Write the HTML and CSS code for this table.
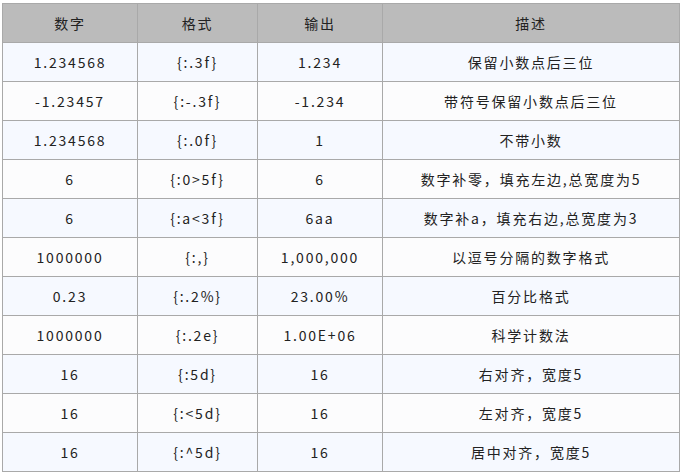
FILE: index.html
```html
<!DOCTYPE html>
<html>
<head>
<meta charset="utf-8">
<link rel="stylesheet" href="styles.css">
</head>
<body>
<table class="fmt">
<colgroup>
<col class="c1"><col class="c2"><col class="c3"><col class="c4">
</colgroup>
<thead>
<tr><th>数字</th><th>格式</th><th>输出</th><th>描述</th></tr>
</thead>
<tbody>
<tr><td>1.234568</td><td>{:.3f}</td><td>1.234</td><td>保留小数点后三位</td></tr>
<tr><td>-1.23457</td><td>{:-.3f}</td><td>-1.234</td><td>带符号保留小数点后三位</td></tr>
<tr><td>1.234568</td><td>{:.0f}</td><td>1</td><td>不带小数</td></tr>
<tr><td>6</td><td>{:0&gt;5f}</td><td>6</td><td>数字补零，填充左边,总宽度为5</td></tr>
<tr><td>6</td><td>{:a&lt;3f}</td><td>6aa</td><td>数字补a，填充右边,总宽度为3</td></tr>
<tr><td>1000000</td><td>{:,}</td><td>1,000,000</td><td>以逗号分隔的数字格式</td></tr>
<tr><td>0.23</td><td>{:.2%}</td><td>23.00%</td><td>百分比格式</td></tr>
<tr><td>1000000</td><td>{:.2e}</td><td>1.00E+06</td><td>科学计数法</td></tr>
<tr><td>16</td><td>{:5d}</td><td>16</td><td>右对齐，宽度5</td></tr>
<tr><td>16</td><td>{:&lt;5d}</td><td>16</td><td>左对齐，宽度5</td></tr>
<tr><td>16</td><td>{:^5d}</td><td>16</td><td>居中对齐，宽度5</td></tr>
</tbody>
</table>
</body>
</html>
```
FILE: styles.css
```css
html, body {
  margin: 0;
  background: #ffffff;
}
body {
  padding: 3px 0 0 2px;
  font-family: "Noto Sans CJK SC", "Noto Sans", sans-serif;
  font-size: 14px;
  color: #222222;
}
.fmt {
  border-collapse: collapse;
  table-layout: fixed;
  width: 677px;
  border: 1px solid #a9a9a9;
}
.c1 { width: 135px; }
.c2 { width: 120px; }
.c3 { width: 125px; }
.c4 { width: 297px; }
.fmt th, .fmt td {
  border: 1px solid #a9a9a9;
  height: 38px;
  padding: 0;
  text-align: center;
  vertical-align: middle;
  letter-spacing: 1.8px;
  font-weight: normal;
  line-height: 20px;
}
.fmt th {
  background: #bbbbbb;
}
.fmt tbody tr:nth-child(odd) td {
  background: #f6f9ff;
}
.fmt tbody tr:nth-child(even) td {
  background: #fcfcfd;
}
```
